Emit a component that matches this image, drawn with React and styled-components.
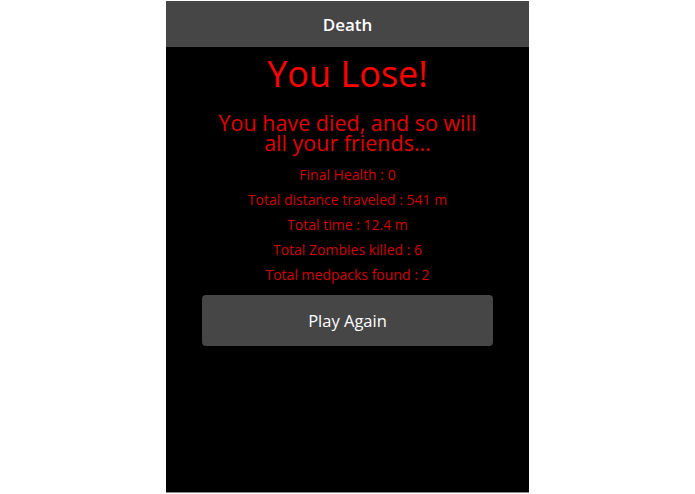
import React from "react";
import styled, { createGlobalStyle } from "styled-components";

const Global = createGlobalStyle`
  html, body { margin: 0; padding: 0; background: #ffffff; }
  body { font-family: "Open Sans", "Noto Sans", sans-serif; }
  * { box-sizing: border-box; }
`;

const Page = styled.div`
  display: flex;
  justify-content: flex-start;
  padding: 1px 0 0 166px;
`;

const Panel = styled.div`
  width: 363px;
  height: 492px;
  background: #000;
  display: flex;
  flex-direction: column;
  border-bottom: 1px solid #8a8a8a;
`;

const Header = styled.header`
  height: 46px;
  background: #464646;
  display: flex;
  align-items: center;
  justify-content: center;
  color: #fff;
  font-size: 17px;
  font-weight: 600;
`;

const Content = styled.main`
  display: flex;
  flex-direction: column;
  align-items: center;
  text-align: center;
  padding-top: 4px;
`;

const Title = styled.h1`
  margin: 0;
  color: #ff0000;
  font-size: 36px;
  font-weight: 500;
  line-height: 46px;
`;

const Subtitle = styled.h2`
  margin: 16px 0 0;
  color: #e00000;
  font-size: 21.5px;
  font-weight: 400;
  line-height: 20px;
  width: 270px;
`;

const Stats = styled.ul`
  list-style: none;
  margin: 9px 0 0;
  padding: 0;
  display: flex;
  flex-direction: column;
  align-items: center;
`;

const Stat = styled.li`
  color: #d00000;
  font-size: 14px;
  line-height: 25px;
`;

const Button = styled.button`
  margin-top: 8px;
  width: 291px;
  height: 51px;
  background: #464646;
  border: none;
  border-radius: 4px;
  color: #fff;
  font-family: inherit;
  font-size: 16.5px;
  cursor: pointer;
`;

const stats = [
  "Final Health : 0",
  "Total distance traveled : 541 m",
  "Total time : 12.4 m",
  "Total Zombies killed : 6",
  "Total medpacks found : 2",
];

export default function App() {
  return (
    <>
      <Global />
      <Page>
        <Panel>
          <Header>Death</Header>
          <Content>
            <Title>You Lose!</Title>
            <Subtitle>You have died, and so will all your friends...</Subtitle>
            <Stats>
              {stats.map((s) => (
                <Stat key={s}>{s}</Stat>
              ))}
            </Stats>
            <Button>Play Again</Button>
          </Content>
        </Panel>
      </Page>
    </>
  );
}
